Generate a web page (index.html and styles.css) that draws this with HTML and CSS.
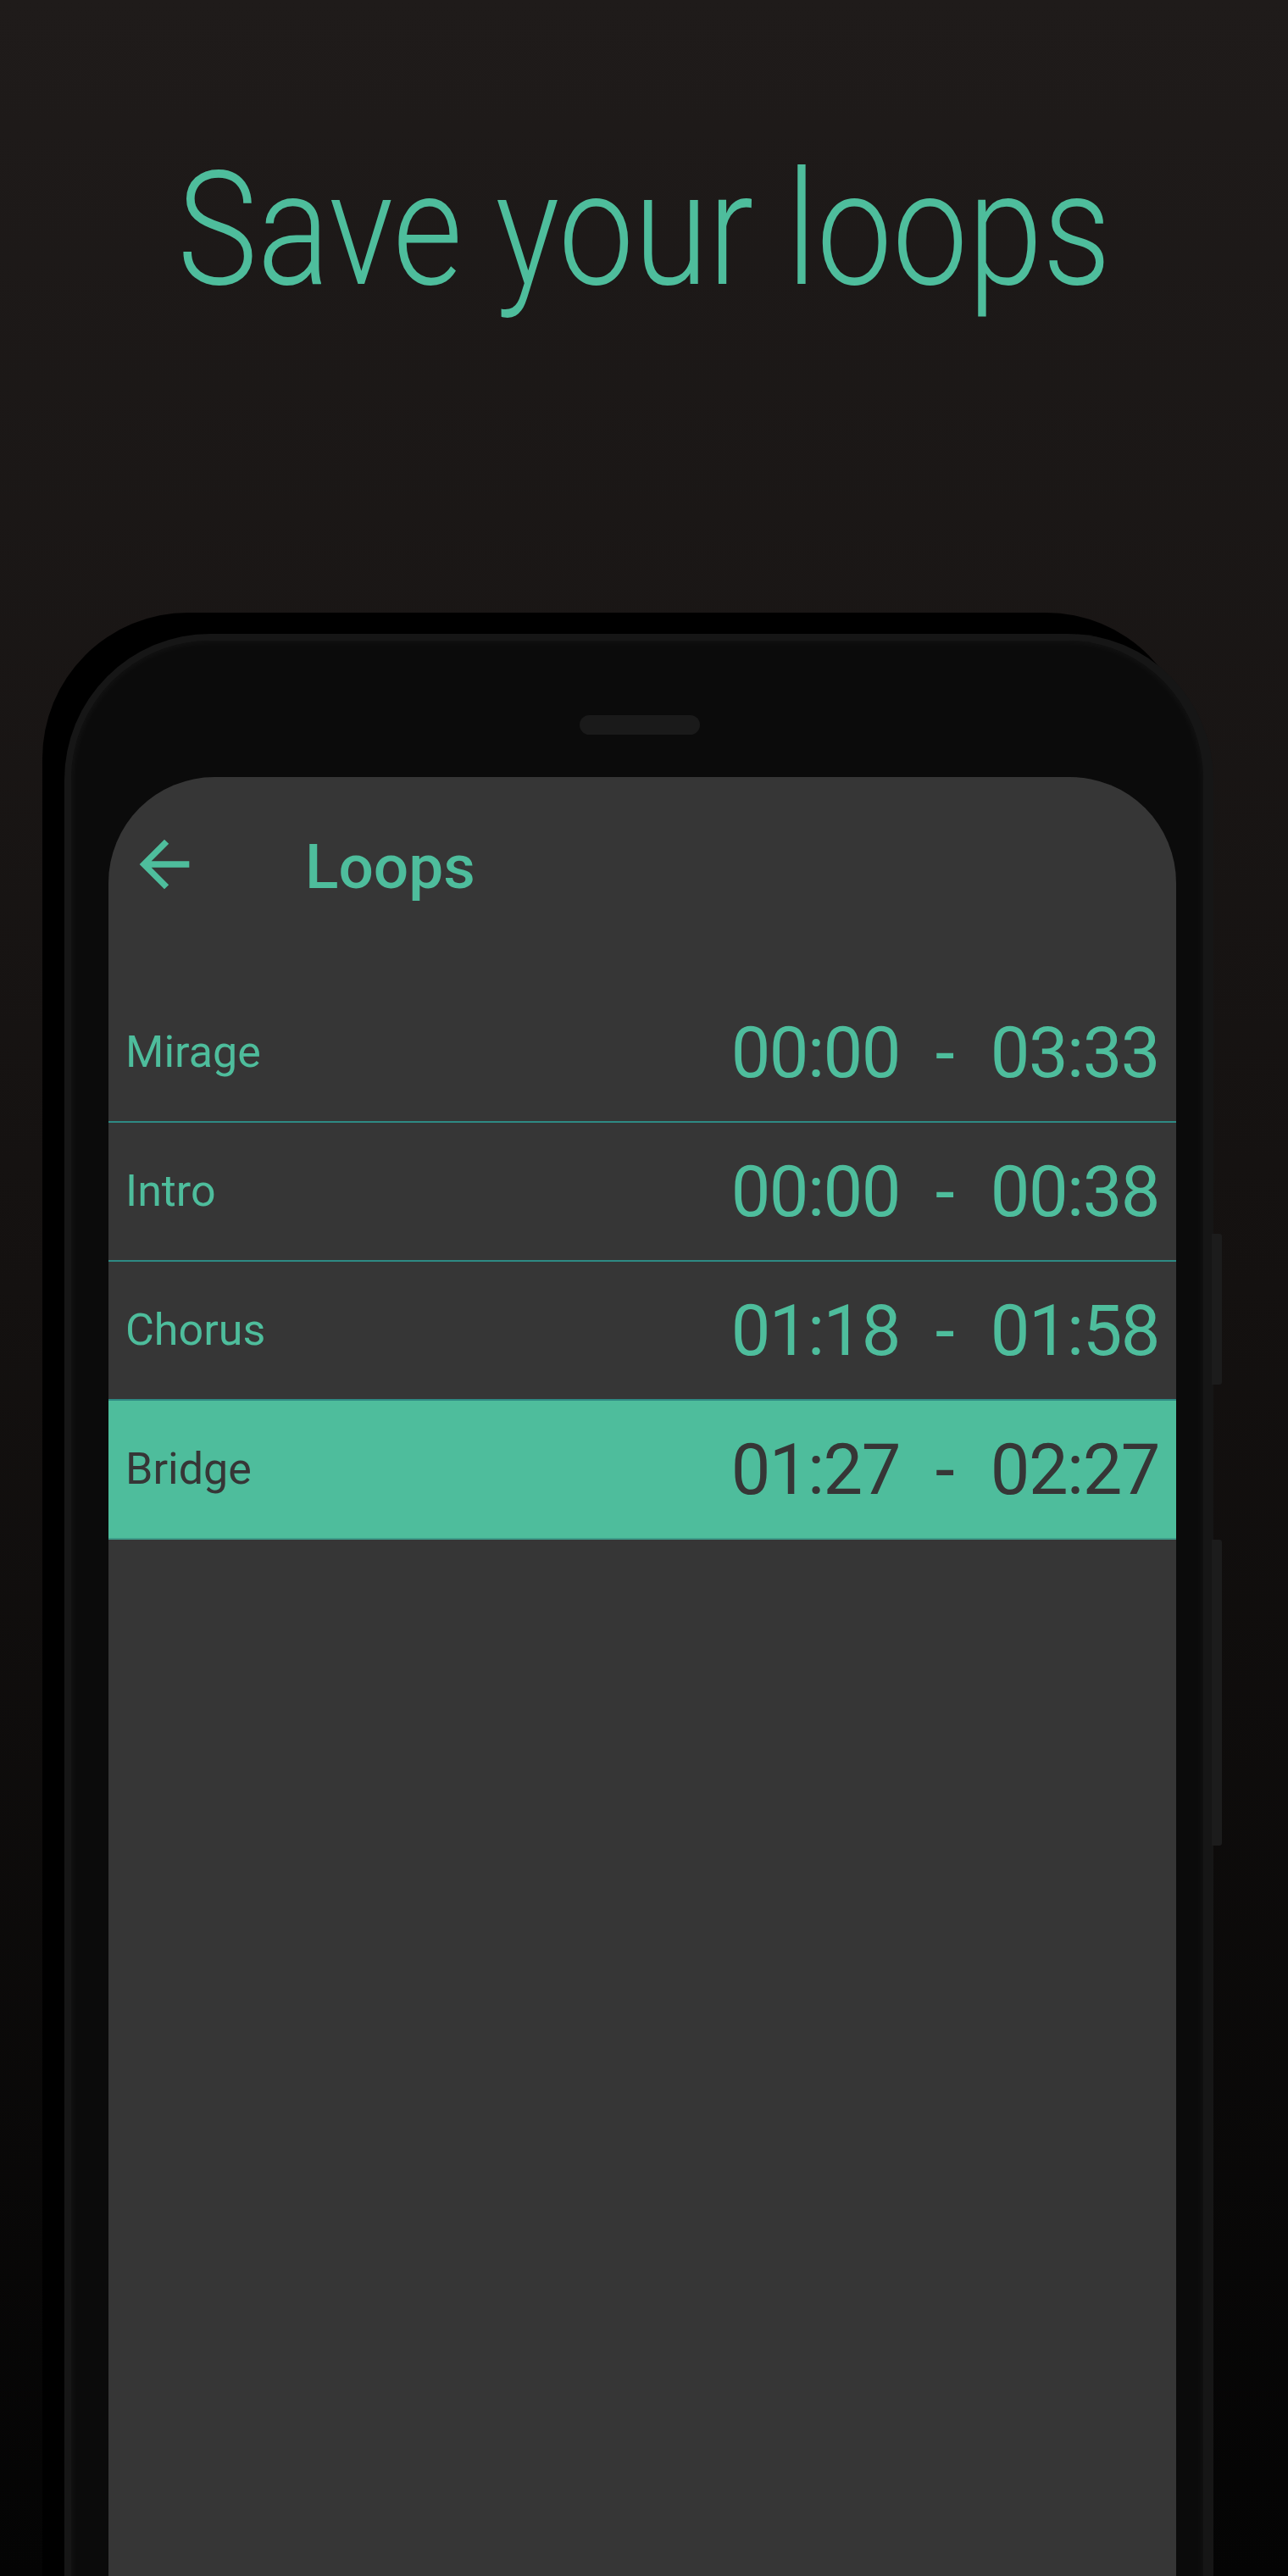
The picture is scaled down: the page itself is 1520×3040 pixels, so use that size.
FILE: index.html
```html
<!DOCTYPE html>
<html lang="en">
<head>
<meta charset="utf-8">
<title>Save your loops</title>
<link rel="stylesheet" href="styles.css">
</head>
<body>
<div class="page">
  <h1 class="headline"><span class="headline-text">Save your loops</span></h1>
  <div class="phone">
    <div class="side-btn side-btn-top"></div>
    <div class="side-btn side-btn-bottom"></div>
    <div class="speaker"></div>
    <div class="screen">
      <div class="toolbar">
        <svg class="back-icon" viewBox="0 0 24 24" aria-hidden="true"><path d="M20 11H7.83l5.59-5.59L12 4l-8 8 8 8 1.41-1.41L7.83 13H20v-2z"/></svg>
        <div class="toolbar-title">Loops</div>
      </div>
      <ul class="loop-list">
        <li class="loop-row">
          <span class="loop-name">Mirage</span>
          <span class="loop-times"><span class="t">00:00</span><span>-</span><span class="t">03:33</span></span>
        </li>
        <li class="loop-row">
          <span class="loop-name">Intro</span>
          <span class="loop-times"><span class="t">00:00</span><span>-</span><span class="t">00:38</span></span>
        </li>
        <li class="loop-row">
          <span class="loop-name">Chorus</span>
          <span class="loop-times"><span class="t">01:18</span><span>-</span><span class="t">01:58</span></span>
        </li>
        <li class="loop-row is-selected">
          <span class="loop-name">Bridge</span>
          <span class="loop-times"><span class="t">01:27</span><span>-</span><span class="t">02:27</span></span>
        </li>
      </ul>
    </div>
  </div>
</div>
</body>
</html>
```

FILE: styles.css
```css
html, body {
  margin: 0;
  padding: 0;
}

body {
  background: #040404;
  font-family: "Roboto", "Liberation Sans", sans-serif;
}

.page {
  width: 1520px;
  height: 3040px;
  overflow: hidden;
  background: linear-gradient(to bottom, #1f1b1a 0%, #141110 50%, #040404 100%);
  display: flex;
  flex-direction: column;
}

.headline {
  margin: 178px 0 0 0;
  height: 187px;
  font-family: "Roboto", sans-serif;
  font-weight: 300;
  font-size: 187px;
  line-height: 1;
  color: #4ebd9c;
  text-align: center;
  white-space: nowrap;
}

.headline-text {
  display: inline-block;
  transform: scaleX(0.851);
  transform-origin: center;
}

.phone {
  position: relative;
  margin: 383px 0 0 76px;
  width: 1356px;
  height: 2500px;
  box-sizing: border-box;
  flex-shrink: 0;
  background: #0b0b0b;
  border-style: solid;
  border-color: #161616;
  border-width: 8px 12px 0 8px;
  border-radius: 172px 172px 0 0;
  padding: 88px 32px 0 44px;
  box-shadow: -26px -25px 0 0 #000, inset 0 0 8px 2px rgba(255, 255, 255, 0.04);
  display: flex;
  flex-direction: column;
}

.side-btn {
  position: absolute;
  left: 1346px;
  width: 12px;
  background: #1c1c1c;
  border-radius: 0 3px 3px 0;
}

.side-btn-top {
  top: 700px;
  height: 178px;
}

.side-btn-bottom {
  top: 1061px;
  height: 361px;
}

.speaker {
  align-self: center;
  margin-left: -6px;
  width: 142px;
  height: 23px;
  border-radius: 12px;
  background: #1a1a1a;
  margin-bottom: 50px;
  flex-shrink: 0;
}

.screen {
  flex: 1;
  background: #363636;
  border-radius: 125px 125px 0 0;
  display: flex;
  flex-direction: column;
}

.toolbar {
  height: 206px;
  display: flex;
  align-items: center;
  padding-left: 22px;
  flex-shrink: 0;
}

.back-icon {
  width: 88px;
  height: 88px;
  fill: #4ebd9c;
  margin-top: -1px;
}

.toolbar-title {
  margin-left: 122px;
  font-size: 73px;
  font-weight: 500;
  color: #4ebd9c;
  line-height: 1;
  margin-top: 6px;
}

.loop-list {
  list-style: none;
  margin: 38px 0 0 0;
  padding: 0;
}

.loop-row {
  height: 162px;
  border-bottom: 2px solid #2e8a84;
  display: flex;
  align-items: center;
  justify-content: space-between;
  padding: 0 20px 0 20px;
  color: #4ebd9c;
}

.loop-row.is-selected {
  background: #4ebd9c;
  color: #363636;
  border-bottom-color: #3f9c8a;
}

.loop-name {
  font-size: 52px;
  line-height: 1;
}

.loop-times {
  display: flex;
  gap: 42px;
  font-size: 83px;
  line-height: 1;
}

.loop-times .t {
  letter-spacing: -1.5px;
}
```
